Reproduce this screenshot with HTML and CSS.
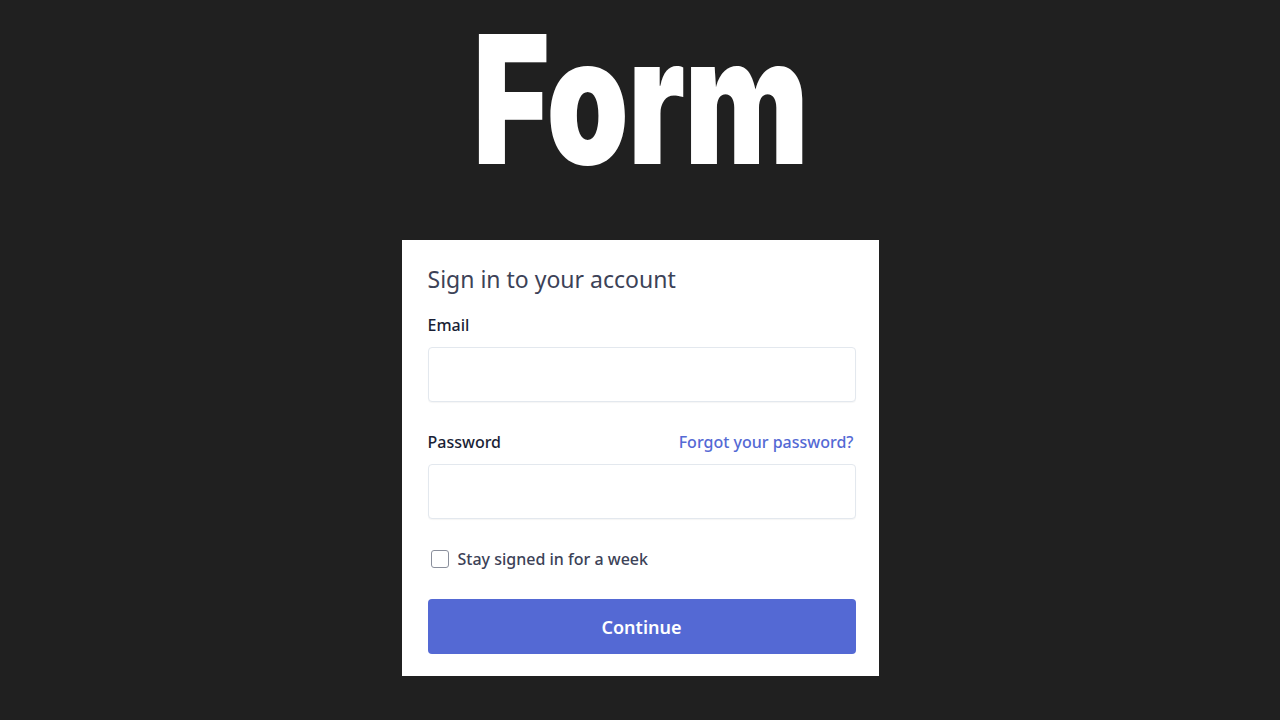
FILE: index.html
```html
<!DOCTYPE html>
<html lang="en">
<head>
  <meta charset="UTF-8" />
  <meta name="viewport" content="width=device-width, initial-scale=1.0"/>
  <title>Form</title>
  <link rel="stylesheet" href="styles.css">
</head>
<body>

<div class="page">
  <h1 class="big-title">Form</h1>

  <form class="card">
    <h2 class="card-title">Sign in to your account</h2>

    <div class="field">
      <label class="label" for="email">Email</label>
      <input class="input" id="email" type="email">
    </div>

    <div class="field">
      <div class="label-row">
        <label class="label" for="password">Password</label>
        <a class="link" href="#">Forgot your password?</a>
      </div>
      <input class="input" id="password" type="password">
    </div>

    <label class="check">
      <input type="checkbox">
      <span class="check-box"></span>
      <span>Stay signed in for a week</span>
    </label>

    <button class="btn" type="button">Continue</button>
  </form>
</div>

</body>
</html>
```

FILE: styles.css
```css
* {
  box-sizing: border-box;
}

body {
  margin: 0;
  padding: 0;
  height: 100vh;
  overflow: hidden;
  background-color: #202020;
  font-family: "Noto Sans", "Open Sans", sans-serif;
}

.page {
  display: flex;
  flex-direction: column;
  align-items: center;
}

.title-wrap {
  height: 240px;
}

.big-title {
  margin: 0;
  height: 240px;
  padding-top: 0;
  font-family: Inter, "Liberation Sans", sans-serif;
  font-weight: 900;
  font-size: 178px;
  line-height: 200px;
  color: #fff;
  letter-spacing: -1px;
  transform: scaleX(0.74);
}

.card {
  width: 477px;
  background: #fff;
  padding: 25px 23px 22px 26px;
  display: flex;
  flex-direction: column;
}

.card-title {
  margin: 0 0 22px;
  font-size: 23px;
  line-height: 28px;
  font-weight: 400;
  color: #3c4257;
}

.field {
  display: flex;
  flex-direction: column;
  gap: 12px;
  margin-bottom: 30px;
}

.label-row {
  display: flex;
  justify-content: space-between;
  align-items: center;
}

.label {
  font-size: 16px;
  line-height: 20px;
  font-weight: 500;
  color: #1a1f36;
}

.link {
  font-size: 16px;
  line-height: 20px;
  font-weight: 500;
  color: #5469d4;
  text-decoration: none;
  padding-right: 2px;
}

.input {
  height: 55px;
  width: 100%;
  border: 1px solid #e3e8ee;
  border-radius: 4px;
  background: #fff;
  box-shadow: 0 1px 1px rgba(0,0,0,0.04);
}

.check {
  display: flex;
  align-items: center;
  gap: 9px;
  margin: 1px 0 31px 3px;
  font-size: 16px;
  line-height: 18px;
  font-weight: 500;
  color: #3c4257;
}

.check input {
  display: none;
}

.check-box {
  width: 18px;
  height: 18px;
  border: 1px solid #8a8f9c;
  border-radius: 3px;
  background: #fff;
}

.btn {
  height: 55px;
  width: 100%;
  border: 0;
  border-radius: 4px;
  background: #5469d4;
  color: #fff;
  font-family: inherit;
  font-size: 18px;
  font-weight: 600;
}
```
